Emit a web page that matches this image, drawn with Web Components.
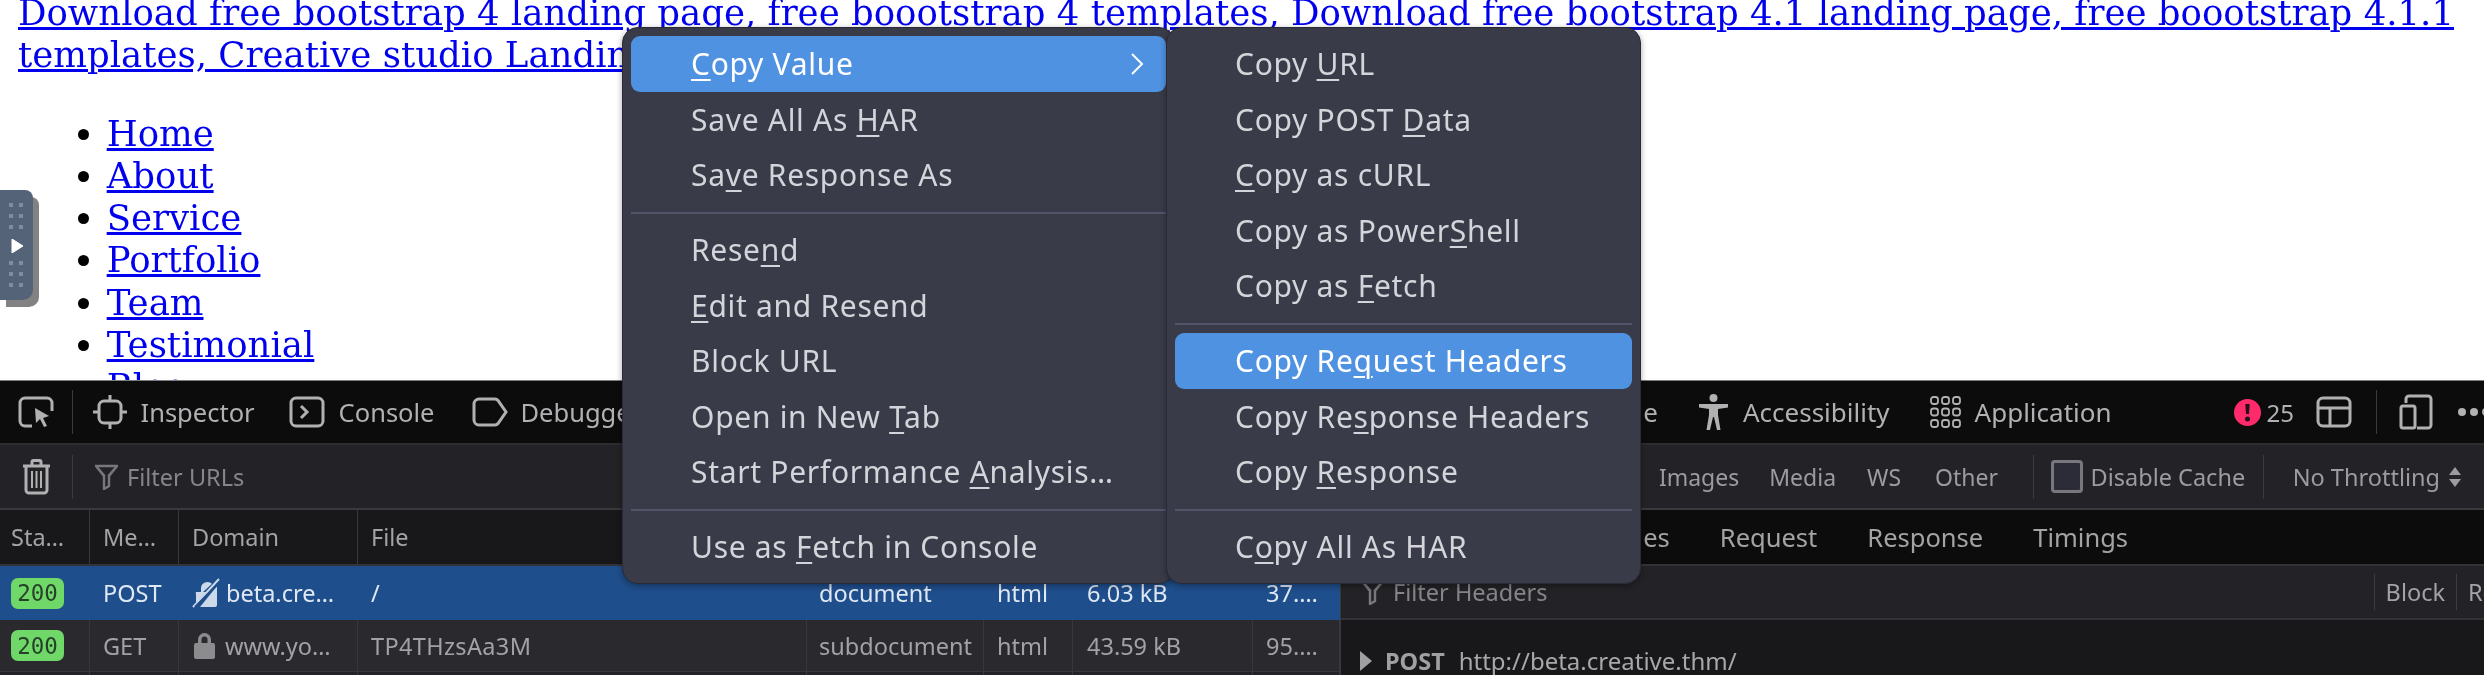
<!DOCTYPE html>
<html lang="en"><head><meta charset="utf-8"><title>Network</title>
<style>
html,body{margin:0;padding:0;width:2484px;height:675px;overflow:hidden;background:#fff}
body{display:flex;flex-direction:column;position:relative;filter:blur(.45px)}
</style></head>
<body>
<page-view></page-view>
<dev-tools></dev-tools>
<side-handle></side-handle>
<ctx-menu style="left:622px;top:27px;width:553px">
  <menu-item active>
    <u>C</u>opy Value<svg slot="end" width="14" height="24" viewBox="0 0 14 24" fill="none" stroke="#fff" stroke-width="2"><path d="M2 2l10 10L2 22"/></svg>
  </menu-item>
  <menu-item>Save All As <u>H</u>AR</menu-item>
  <menu-item>Sa<u>v</u>e Response As</menu-item>
  <menu-sep></menu-sep>
  <menu-item>Rese<u>n</u>d</menu-item>
  <menu-item><u>E</u>dit and Resend</menu-item>
  <menu-item>Block URL</menu-item>
  <menu-item>Open in New <u>T</u>ab</menu-item>
  <menu-item>Start Performance <u>A</u>nalysis…</menu-item>
  <menu-sep></menu-sep>
  <menu-item>Use as <u>F</u>etch in Console</menu-item>
</ctx-menu>
<ctx-menu style="left:1166px;top:27px;width:475px">
  <menu-item>Copy <u>U</u>RL</menu-item>
  <menu-item>Copy POST <u>D</u>ata</menu-item>
  <menu-item><u>C</u>opy as cURL</menu-item>
  <menu-item>Copy as Power<u>S</u>hell</menu-item>
  <menu-item>Copy as <u>F</u>etch</menu-item>
  <menu-sep></menu-sep>
  <menu-item active>Copy Re<u>q</u>uest Headers</menu-item>
  <menu-item>Copy Re<u>s</u>ponse Headers</menu-item>
  <menu-item>Copy <u>R</u>esponse</menu-item>
  <menu-sep></menu-sep>
  <menu-item>C<u>o</u>py All As HAR</menu-item>
</ctx-menu>
<script>
const UI='"Noto Sans","Open Sans",sans-serif';
function def(name,css,html,observe){
  customElements.define(name,class extends HTMLElement{
    constructor(){super();const r=this.attachShadow({mode:'open'});r.innerHTML='<style>'+css+'</style>'+html;}
  });
}
const ic={
 pick:'<svg width="36" height="32" viewBox="0 0 36 32" fill="none" stroke="#b1b1b3" stroke-width="3"><path d="M14 30H7a5 5 0 0 1-5-5V7a5 5 0 0 1 5-5h22a5 5 0 0 1 5 5v8"/><path d="M17 12l14 8-6 2 4 8-3 1-4-8-4 4z" fill="#b1b1b3" stroke="none"/></svg>',
 insp:'<svg width="36" height="36" viewBox="0 0 36 36" fill="none" stroke="#b1b1b3" stroke-width="3"><rect x="7" y="7" width="22" height="22" rx="5"/><path d="M18 1v6M18 29v6M1 18h6M29 18h6"/></svg>',
 cons:'<svg width="36" height="32" viewBox="0 0 36 32" fill="none" stroke="#b1b1b3" stroke-width="3"><rect x="2" y="2" width="32" height="28" rx="5"/><path d="M12 10l6 6-6 6"/></svg>',
 dbg:'<svg width="37" height="30" viewBox="0 0 37 30" fill="none" stroke="#b1b1b3" stroke-width="3"><path d="M7 2h16a4 4 0 0 1 3 1.500l8 11.500-8 11.500a4 4 0 0 1-3 1.500H7a5 5 0 0 1-5-5V7a5 5 0 0 1 5-5z"/></svg>',
 a11y:'<svg width="31" height="36" viewBox="0 0 31 36" fill="#b1b1b3"><circle cx="15.500" cy="4" r="4"/><path d="M1 10h29v3.500l-10 1.500v6l2.500 15h-3.500l-3-13h-1l-3 13H8.500L11 21v-6L1 13.500z"/></svg>',
 app:'<svg width="31" height="32" viewBox="0 0 31 32" fill="none" stroke="#b1b1b3" stroke-width="1.800"><g id="r"><rect x="1" y="1" width="7" height="7" rx="2.500"/><rect x="12" y="1" width="7" height="7" rx="2.500"/><rect x="23" y="1" width="7" height="7" rx="2.500"/><rect x="1" y="12.500" width="7" height="7" rx="2.500"/><rect x="12" y="12.500" width="7" height="7" rx="2.500"/><rect x="23" y="12.500" width="7" height="7" rx="2.500"/><rect x="1" y="24" width="7" height="7" rx="2.500"/><rect x="12" y="24" width="7" height="7" rx="2.500"/><rect x="23" y="24" width="7" height="7" rx="2.500"/></g></svg>',
 err:'<svg width="27" height="27" viewBox="0 0 27 27"><circle cx="13.500" cy="13.500" r="13.500" fill="#ff2a6a"/><path d="M11.300 5h4.400l-.7 10h-3z" fill="#26101a"/><circle cx="13.500" cy="20" r="2.500" fill="#26101a"/></svg>',
 layout:'<svg width="36" height="32" viewBox="0 0 36 32" fill="none" stroke="#b1b1b3" stroke-width="3"><rect x="2" y="2" width="32" height="28" rx="5"/><path d="M2 12h32M14 12v18"/></svg>',
 dev:'<svg width="34" height="36" viewBox="0 0 34 36" fill="none" stroke="#b1b1b3" stroke-width="3"><path d="M7 9V5a3 3 0 0 1 3-3h19a3 3 0 0 1 3 3v26a3 3 0 0 1-3 3H18"/><rect x="2" y="12" width="14" height="22" rx="2"/></svg>',
 trash:'<svg width="29" height="36" viewBox="0 0 29 36" fill="none" stroke="#b1b1b3" stroke-width="3"><path d="M1 7h27M10 6V3a1.500 1.500 0 0 1 1.500-1.500h6A1.500 1.500 0 0 1 19 3v3"/><path d="M4 8v23a3 3 0 0 0 3 3h15a3 3 0 0 0 3-3V8" /><path d="M10 12v17M14.500 12v17M19 12v17" stroke-width="2"/></svg>',
 funnel:'<svg width="23" height="26" viewBox="0 0 23 26" fill="none" stroke="#77777c" stroke-width="2.400"><path d="M1 2h21l-8 10v10l-5 3V12z"/><path d="M10 12L4 5M13 12l6-7" stroke-width="1.500"/></svg>',
 lock:'<svg width="23" height="27" viewBox="0 0 23 27"><path d="M5 11V7.500a6.500 6.500 0 0 1 13 0V11h2a2 2 0 0 1 2 2v12a2 2 0 0 1-2 2H3a2 2 0 0 1-2-2V13a2 2 0 0 1 2-2zm3.500 0h6V7.500a3 3 0 0 0-6 0z" fill="#8c8c8e"/></svg>',
 nolock:'<svg width="30" height="30" viewBox="0 0 30 30"><path d="M9 14v-3.500a6.500 6.500 0 0 1 11-4.700L11 14zM4 14h10L4 25V16a2 2 0 0 1 0-2zM25 8v19a2 2 0 0 1-2 2H8z" fill="#ccd9ea"/><path d="M1 29L27 1" stroke="#ccd9ea" stroke-width="2"/><path d="M3 29L29 3" stroke="#1f4e8c" stroke-width="2"/></svg>',
};
def('page-view',`:host{display:block;height:380px;overflow:hidden;background:#fff;flex:none;font:35.530px/42.300px "DejaVu Serif",serif;color:#000}
 .in{margin-top:-8px;padding:0 18px}
 a{color:#00e;text-decoration:underline}
 p{margin:0 0 36px}
 ul{margin:0;padding:0 0 0 88.700px}`,
 `<div class="in"><p><a href="#">Download free bootstrap 4 landing page, free boootstrap 4 templates, Download free bootstrap 4.1 landing page, free boootstrap 4.1.1 templates, Creative studio Landing page</a></p>
 <ul><li><a href="#">Home</a></li><li><a href="#">About</a></li><li><a href="#">Service</a></li><li><a href="#">Portfolio</a></li><li><a href="#">Team</a></li><li><a href="#">Testimonial</a></li><li><a href="#">Blog</a></li></ul></div>`);
def('side-handle',`:host{position:absolute;left:0;top:190px;width:33px;height:110px;background:#556378;border-radius:0 8px 10px 0;box-shadow:6px 7px 0 #828282}
 .g{display:grid;grid-template-columns:4px 4px;gap:7px 6px;margin-left:9px}
 :host{display:flex;flex-direction:column;padding-top:13px;box-sizing:border-box}
 i{display:block;width:4px;height:4px;background:#7f8da3}
 svg{display:block;margin:10px 0 8px 11px}`,
 `<div class="g"><i></i><i></i><i></i><i></i><i></i><i></i></div><svg width="12" height="14" viewBox="0 0 12 14"><path d="M1 0l11 7L1 14z" fill="#fff" stroke="#fff" stroke-linejoin="round"/></svg><div class="g"><i></i><i></i><i></i><i></i><i></i><i></i></div>`);
def('dt-tab',`:host{display:flex;align-items:center;flex:none;font:26px ${UI};color:#b1b1b3;white-space:nowrap}
 ::slotted(svg){display:block;margin-right:var(--ig,14px)}`,`<slot></slot>`);
def('v-sep',`:host{display:block;flex:none;width:1px;height:44px;background:#3a3a3f}`,``);
def('dev-tools',`:host{display:flex;flex-direction:column;flex:1;border-top:1px solid #7d7d80;background:#18181a;overflow:hidden}`,
 `<dt-toolbar></dt-toolbar><dt-filter></dt-filter><dt-main></dt-main>`);
def('dt-toolbar',`:host{display:flex;align-items:center;justify-content:space-between;height:62px;flex:none;background:#0c0c0d;border-bottom:2px solid #2c2c30;white-space:nowrap;overflow:hidden}
 .l,.r{display:flex;align-items:center}
 .l dt-tab{font-size:25.500px;--ig:12.500px}`,
 `<div class="l" style="padding-left:18px">${ic.pick}<v-sep style="margin:0 19px 0 18px"></v-sep>
  <dt-tab>${ic.insp}Inspector</dt-tab><dt-tab style="margin-left:34px;--ig:14px">${ic.cons}Console</dt-tab><dt-tab style="margin-left:37px"><span style="display:contents">${ic.dbg}</span><span style="margin-left:12px">Debugger</span></dt-tab></div>
  <div class="r"><dt-tab style="margin-right:40px">Storage</dt-tab><dt-tab style="margin-right:40px">${ic.a11y}Accessibility</dt-tab><dt-tab style="margin-right:122px">${ic.app}Application</dt-tab>
  ${ic.err}<dt-tab style="margin-left:6px;margin-right:22px;font-size:24px">25</dt-tab>${ic.layout}<v-sep style="margin:0 22px 0 24px"></v-sep>${ic.dev}
  <svg style="margin:0 -4px 0 25px" width="30" height="10" viewBox="0 0 30 10" fill="#b1b1b3"><circle cx="4" cy="5" r="4"/><circle cx="16" cy="5" r="4"/><circle cx="28" cy="5" r="4"/></svg></div>`);
def('dt-filter',`:host{display:flex;align-items:center;justify-content:space-between;height:63px;flex:none;background:#232327;border-bottom:2px solid #38383d;white-space:nowrap;overflow:hidden;font:23px ${UI};color:#9c9ca0}
 .l,.r{display:flex;align-items:center}
 .hint{color:#85858a;font-size:23.500px}
 .cb{width:26px;height:27px;border:3px solid #77777d;border-radius:4px;background:#2c2c38;margin-right:8px}
 .t{margin-left:31px}`,
 `<div class="l" style="padding-left:22px">${ic.trash}<v-sep style="margin:0 22px 0 21px"></v-sep>${ic.funnel}<span class="hint" style="margin-left:9px">Filter URLs</span></div>
 <div class="r" style="margin-right:-22px"><span class="t">Images</span><span class="t" style="margin-left:30px">Media</span><span class="t">WS</span><span class="t" style="margin-left:34px">Other</span><v-sep style="margin:0 17px 0 34.500px"></v-sep><span class="cb"></span><span style="font-size:23.500px">Disable Cache</span><v-sep style="margin:0 28.500px 0 18px"></v-sep><span style="font-size:23.500px">No Throttling</span>
 <svg style="margin:0 0 0 9px" width="12" height="24" viewBox="0 0 12 24" fill="#9c9ca0"><path d="M6 2l6 8H0zM6 22L0 14h12z"/></svg><span style="width:45px"></span></div>`);
def('dt-main',`:host{display:grid;grid-template-columns:1340px 1px 1fr;flex:1;min-height:0;overflow:hidden}
 .split{background:#38383d}`,`<net-table></net-table><div class="split"></div><detail-pane></detail-pane>`);
def('net-cell',`:host{display:flex;align-items:center;padding-left:var(--pl,12px);box-sizing:border-box;border-right:1px solid var(--line,#3a3a3f);white-space:nowrap;overflow:hidden;font:23.500px ${UI}}`,`<slot></slot>`);
def('status-badge',`:host{display:inline-flex;align-items:center;justify-content:center;width:53px;height:31px;background:#70d868;color:#26402a;border-radius:7px;font:22.500px "DejaVu Sans Mono",monospace}`,`<slot></slot>`);
const cols='90px 89px 179px 449px 177px 89px 180px 87px';
def('net-table',`:host{display:grid;grid-template-rows:56px 54px 52px 1fr;font:23.500px ${UI};overflow:hidden}
 .row{display:grid;grid-template-columns:${cols};min-width:0}
 .h{background:#18181a;color:#a3a3a6;border-bottom:2px solid #333337;--line:#38383c;box-sizing:border-box;}
 .s{background:#1f4e8c;color:#dfe8f3;--line:transparent}
 .n{background:#2a2a2e;color:#a2a2a5;--line:#38383c;border-bottom:1px solid #38383c;box-sizing:border-box}
 .e{background:#232327;--line:#38383c}
 svg{margin-right:4px;flex:none}
 .dom{--pl:13px}`,
 `<div class="row h"><net-cell style="--pl:11px">Sta…</net-cell><net-cell style="--pl:13px">Me…</net-cell><net-cell style="--pl:13px">Domain</net-cell><net-cell style="--pl:13px">File</net-cell><net-cell></net-cell><net-cell></net-cell><net-cell></net-cell><net-cell></net-cell></div>
 <div class="row s"><net-cell style="--pl:11px"><status-badge>200</status-badge></net-cell><net-cell style="--pl:13px">POST</net-cell><net-cell class="dom">${ic.nolock}beta.cre…</net-cell><net-cell style="--pl:13px">/</net-cell><net-cell>document</net-cell><net-cell style="--pl:13px">html</net-cell><net-cell style="--pl:14px">6.03 kB</net-cell><net-cell style="--pl:13px">37.…</net-cell></div>
 <div class="row n"><net-cell style="--pl:11px"><status-badge>200</status-badge></net-cell><net-cell style="--pl:13px">GET</net-cell><net-cell class="dom" style="--pl:14px"><span style="display:contents">${ic.lock}</span><span style="margin-left:5px">www.yo…</span></net-cell><net-cell style="--pl:13px;letter-spacing:.35px">TP4THzsAa3M</net-cell><net-cell>subdocument</net-cell><net-cell style="--pl:13px">html</net-cell><net-cell style="--pl:14px">43.59 kB</net-cell><net-cell style="--pl:13px">95.…</net-cell></div>
 <div class="row e"><net-cell></net-cell><net-cell></net-cell><net-cell></net-cell><net-cell></net-cell><net-cell></net-cell><net-cell></net-cell><net-cell></net-cell><net-cell></net-cell></div>`);
def('detail-pane',`:host{display:grid;grid-template-rows:56px 54px 1fr;font:23.500px ${UI};color:#a3a3a6;white-space:nowrap;overflow:hidden}
 .tabs{background:#0c0c0d;border-bottom:2px solid #333337;box-sizing:border-box;display:flex;align-items:center;padding-left:235px;gap:50px;font-size:25.500px}
 .fil{background:#232327;border-bottom:2px solid #333337;box-sizing:border-box;display:flex;align-items:center;padding-left:20px;color:#85858a}
 .fil svg{margin-right:9px}
 .fil .sp{flex:1}
 .fil b{font-weight:400;color:#a3a3a6;padding:0 11px;border-left:1px solid #3c3c41;line-height:36px}
 .fil b:last-child{width:16px;overflow:hidden;padding-right:0}
 .req{display:flex;align-items:center;padding:24px 0 0 19px;color:#a8a8ab;align-self:start;font-size:24px}
 .req strong{margin:0 14px 0 13px;color:#a0a0a3;font-size:23.500px}`,
 `<div class="tabs"><span>Cookies</span><span>Request</span><span>Response</span><span>Timings</span></div>
 <div class="fil">${ic.funnel}<span>Filter Headers</span><span class="sp"></span><b>Block</b><b>Resend</b></div>
 <div class="req"><svg width="12" height="20" viewBox="0 0 12 20" fill="#a0a0a3"><path d="M0 0l12 10L0 20z"/></svg><strong>POST</strong><span>http://beta.creative.thm/</span></div>`);
def('ctx-menu',`:host{position:absolute;display:block;box-sizing:border-box;height:557px;padding:8px 8px;background:#393b49;border:1px solid #2a2b35;border-radius:16px;box-shadow:0 2px 6px rgba(0,0,0,.35);font:30px ${UI};letter-spacing:.7px;color:#d3d5da}`,`<slot></slot>`);
def('menu-item',`:host{display:flex;align-items:center;justify-content:space-between;height:55.500px;padding:0 22px 0 60px;box-sizing:border-box;border-radius:9px;white-space:nowrap}
 :host([active]){background:#4f92e2;color:#fff}
 ::slotted(u){text-decoration-thickness:2px;text-underline-offset:4px}
 .t{display:block}`,`<span class="t"><slot></slot></span><slot name="end"></slot>`);
def('menu-sep',`:host{display:block;height:2px;background:#52546a;margin:9px 0 8.500px}`,``);
</script>
</body></html>
